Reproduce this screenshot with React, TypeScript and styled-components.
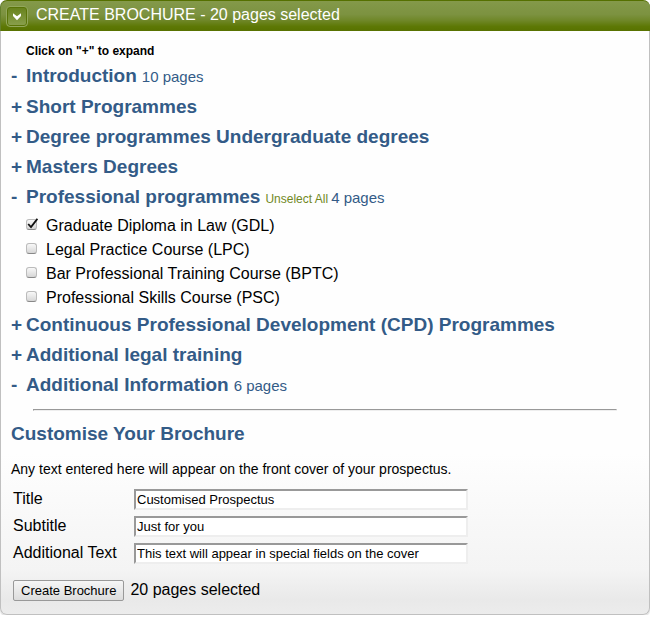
import { useState } from "react";
import type { ReactNode } from "react";
import styled, { createGlobalStyle } from "styled-components";

const GlobalStyle = createGlobalStyle`
  * { box-sizing: border-box; }
  body {
    margin: 0;
    background: #fff;
    color: #000;
    font-family: "Liberation Sans", Arial, sans-serif;
    font-size: 16px;
  }
`;

const Panel = styled.main`
  border-radius: 7px;
  background: linear-gradient(#fefefe 0, #fefefe calc(100% - 160px), #f4f4f4 calc(100% - 45px), #e9e9e9 calc(100% - 14px), #ececec 100%);
  border: 1px solid #c0c0c0;
  border-top: 0;
  box-shadow: 0 2px 1px #e4e4e4;
`;

const Header = styled.header`
  display: flex;
  align-items: center;
  gap: 8px;
  height: 31px;
  margin: 0 -1px;
  padding: 1px 5px 0;
  border-top: 1px solid #557000;
  border-left: 1px solid #64802a;
  border-radius: 7px 7px 0 0;
  background: linear-gradient(#84994a 0, #7c9240 45%, #6f8728 65%, #5d7805 85%, #587200 100%);
`;

const HeaderTitle = styled.h1`
  margin: 0;
  padding-bottom: 4px;
  font-size: 16px;
  font-weight: 400;
  line-height: 20px;
  color: #fff;
`;

const CollapseButton = styled.button`
  display: flex;
  align-items: center;
  justify-content: center;
  width: 22px;
  height: 21px;
  padding: 0;
  border: 1px solid #93a85c;
  border-radius: 4px;
  background: linear-gradient(#66811a, #8aa04e);
  box-shadow: inset 0 0 0 1px #5a7408;
`;

const Body = styled.div`
  padding: 12px 10px 13px;
`;

const Hint = styled.p`
  margin: 0 0 2px 15px;
  font-size: 12px;
  font-weight: 700;
  line-height: 16px;
`;

const SectionRow = styled.div`
  display: flex;
  align-items: baseline;
  height: 30px;
  line-height: 30px;
  color: #335b87;

  ${Hint} + & { margin-bottom: 1px; }
`;

const Toggle = styled.button`
  flex: none;
  width: 15px;
  padding: 0;
  border: 0;
  background: none;
  color: inherit;
  font: inherit;
  font-weight: 700;
  font-size: 19px;
  line-height: 30px;
  text-align: left;
`;

const Heading = styled.h2`
  margin: 0;
  font-size: 19px;
  line-height: 30px;
  color: #335b87;
`;

const PageCount = styled.span`
  margin-left: 5px;
  font-size: 15px;
`;

const UnselectLink = styled.a`
  margin-left: 5px;
  font-size: 12px;
  color: #71881f;
  text-decoration: none;

  & + ${PageCount} { margin-left: 3px; }
`;

const CourseList = styled.ul`
  margin: 2px 0 0 15px;
  padding: 0;
  list-style: none;
`;

const Course = styled.li`
  display: flex;
  align-items: center;
  height: 24px;
`;

const CheckHolder = styled.span`
  position: relative;
  display: flex;
  width: 11px;
  height: 11px;
  margin: 0 9px 3px 0;
`;

const Tick = styled.svg`
  position: absolute;
  left: 1px;
  bottom: 1px;
  pointer-events: none;
`;

const Checkbox = styled.input`
  appearance: none;
  width: 11px;
  height: 11px;
  margin: 0;
  border: 1px solid #bbb;
  border-bottom-color: #888;
  border-radius: 3px;
  background: linear-gradient(#f8f8f8, #d6d6d6);
`;

const Divider = styled.hr`
  width: 93%;
  margin: 9px auto 8px;
  border: 1px solid #999;
  border-right-color: #eee;
  border-bottom-color: #eee;
`;

const Intro = styled.p`
  margin: 12px 0;
  font-size: 14px;
  line-height: 16px;
`;

const Fields = styled.div`
  display: grid;
  grid-template-columns: 119px minmax(0, 334px);
  gap: 6px 2px;
  align-items: center;
  padding-left: 2px;
`;

const FieldLabel = styled.label`
  line-height: 18px;
  padding-bottom: 1px;
`;

const TextInput = styled.input`
  width: 100%;
  height: 21px;
  padding: 1px;
  border: 2px solid #999;
  border-right-color: #eee;
  border-bottom-color: #eee;
  background: #fff;
  color: #000;
  font: 13px "Liberation Sans", Arial, sans-serif;
`;

const Actions = styled.div`
  display: flex;
  align-items: center;
  gap: 6px;
  margin-top: 16px;
  padding-left: 2px;
`;

const SubmitButton = styled.button`
  height: 21px;
  padding: 0 7px;
  border: 1px solid #999;
  border-radius: 2px;
  background: linear-gradient(#f6f6f6, #dcdcdc);
  color: #000;
  font: 13px "Liberation Sans", Arial, sans-serif;
`;

const Status = styled.span`
  line-height: 18px;
  padding-bottom: 2px;
`;

type SectionProps = { title: string; open?: boolean; pages?: number; children?: ReactNode };

function Section({ title, open = false, pages, children }: SectionProps) {
  return (
    <SectionRow>
      <Toggle type="button" aria-expanded={open} aria-label={`${open ? "Collapse" : "Expand"} ${title}`}>
        {open ? "-" : "+"}
      </Toggle>
      <Heading>{title}</Heading>
      {children}
      {pages !== undefined && <PageCount>{pages} pages</PageCount>}
    </SectionRow>
  );
}

const courseNames = [
  "Graduate Diploma in Law (GDL)",
  "Legal Practice Course (LPC)",
  "Bar Professional Training Course (BPTC)",
  "Professional Skills Course (PSC)",
];

const fields = [
  { id: "title", label: "Title", value: "Customised Prospectus" },
  { id: "subtitle", label: "Subtitle", value: "Just for you" },
  { id: "additional", label: "Additional Text", value: "This text will appear in special fields on the cover" },
];

export default function App() {
  const [selected, setSelected] = useState([courseNames[0]]);
  const toggle = (name: string) =>
    setSelected(selected.includes(name) ? selected.filter((n) => n !== name) : [...selected, name]);

  return (
    <>
      <GlobalStyle />
      <Panel>
        <Header>
          <CollapseButton type="button" aria-label="Collapse panel">
            <svg width="10" height="9" viewBox="0 0 10 9" aria-hidden="true">
              <path d="M1 1.2 L5 4.2 L9 1.2 V4 L5 8.2 L1 4 Z" fill="#fff" />
            </svg>
          </CollapseButton>
          <HeaderTitle>CREATE BROCHURE - 20 pages selected</HeaderTitle>
        </Header>
        <Body>
          <Hint>Click on "+" to expand</Hint>
          <Section title="Introduction" open pages={10} />
          <Section title="Short Programmes" />
          <Section title="Degree programmes Undergraduate degrees" />
          <Section title="Masters Degrees" />
          <Section title="Professional programmes" open pages={4}>
            <UnselectLink
              href="#"
              onClick={(e) => {
                e.preventDefault();
                setSelected([]);
              }}
            >
              Unselect All
            </UnselectLink>
          </Section>
          <CourseList>
            {courseNames.map((name, i) => (
              <Course key={name}>
                <CheckHolder>
                  <Checkbox
                    type="checkbox"
                    id={`course-${i}`}
                    checked={selected.includes(name)}
                    onChange={() => toggle(name)}
                  />
                  {selected.includes(name) && (
                    <Tick width="11" height="11" viewBox="0 0 11 11" aria-hidden="true">
                      <path d="M1.2 6 L4 9 L10.4 0.8" fill="none" stroke="#111" strokeWidth="1.8" />
                    </Tick>
                  )}
                </CheckHolder>
                <label htmlFor={`course-${i}`}>{name}</label>
              </Course>
            ))}
          </CourseList>
          <Section title="Continuous Professional Development (CPD) Programmes" />
          <Section title="Additional legal training" />
          <Section title="Additional Information" open pages={6} />
          <Divider />
          <Heading>Customise Your Brochure</Heading>
          <Intro>Any text entered here will appear on the front cover of your prospectus.</Intro>
          <form onSubmit={(e) => e.preventDefault()}>
            <Fields>
              {fields.map((f) => [
                <FieldLabel key={`${f.id}-label`} htmlFor={f.id}>{f.label}</FieldLabel>,
                <TextInput key={f.id} id={f.id} type="text" defaultValue={f.value} />,
              ])}
            </Fields>
            <Actions>
              <SubmitButton type="submit">Create Brochure</SubmitButton>
              <Status>20 pages selected</Status>
            </Actions>
          </form>
        </Body>
      </Panel>
    </>
  );
}
